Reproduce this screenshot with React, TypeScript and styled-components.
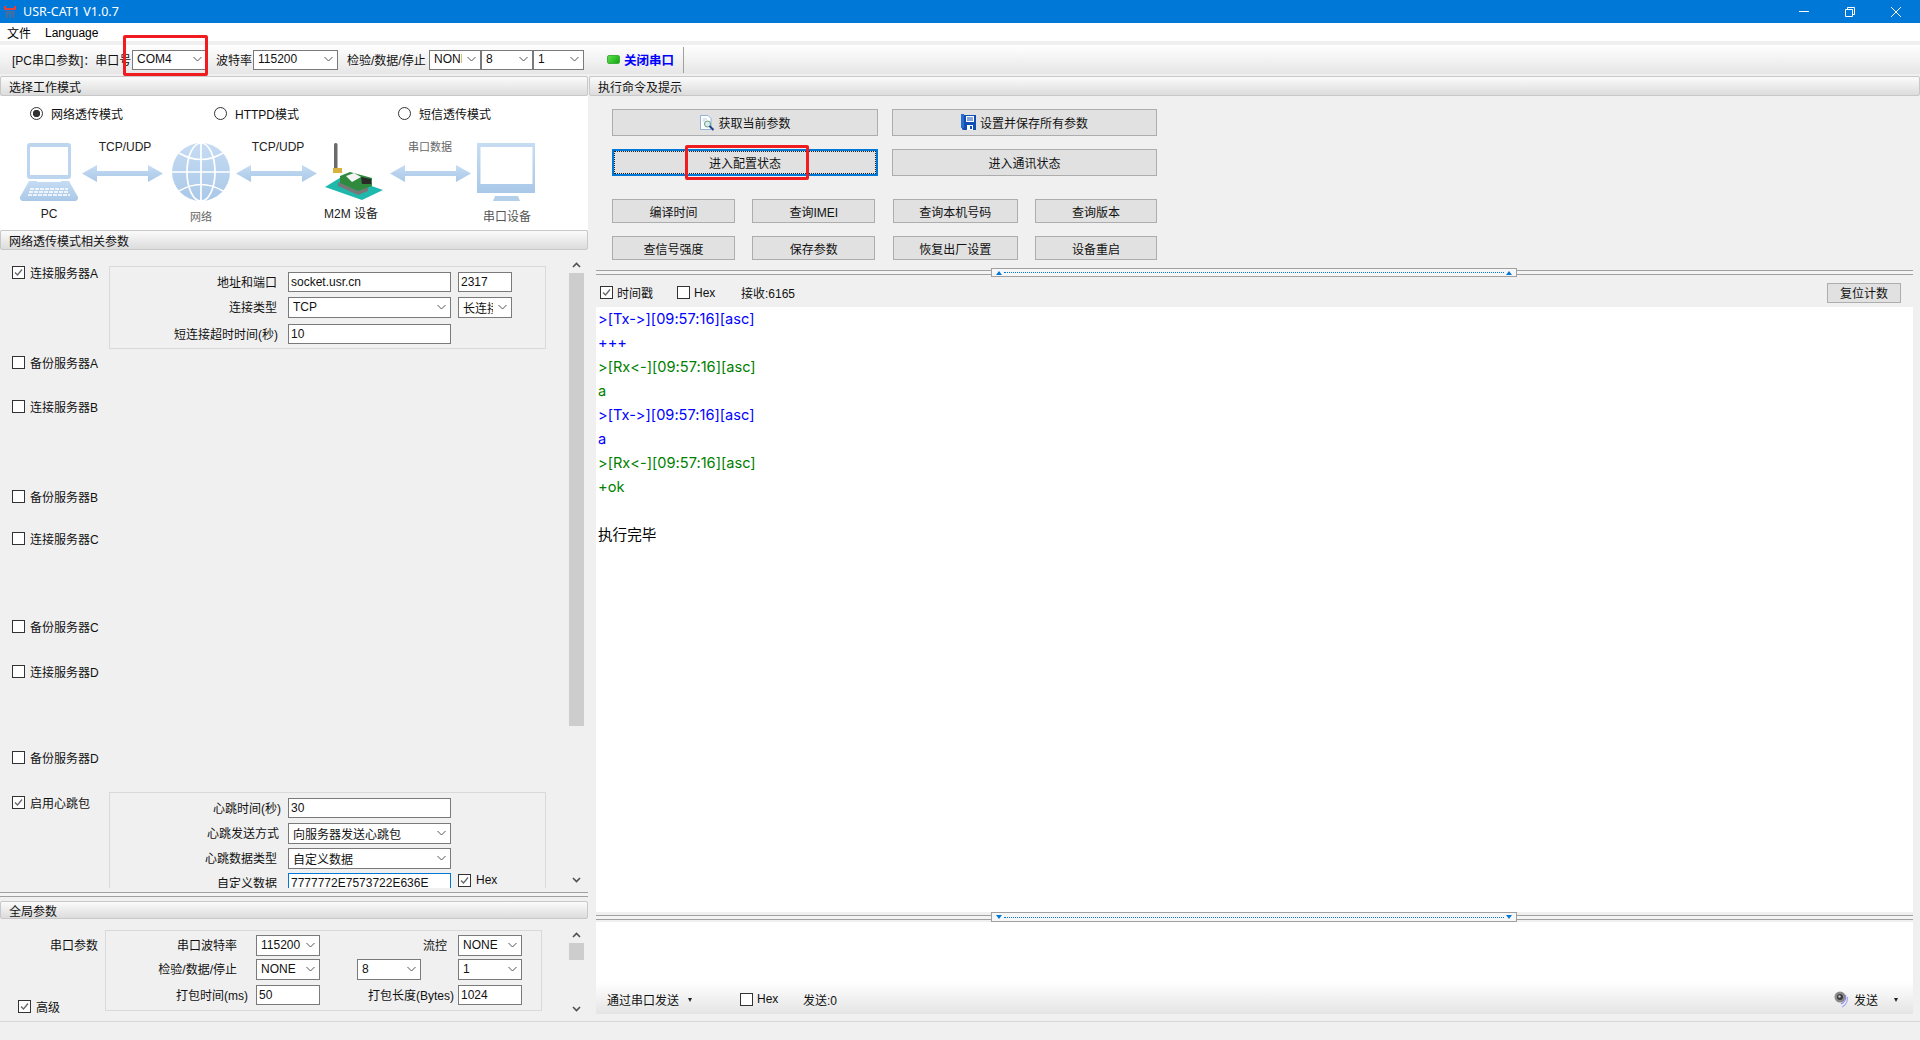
import React from 'react';
import styled, { createGlobalStyle } from 'styled-components';

const GlobalStyle = createGlobalStyle`
  html, body { margin: 0; padding: 0; background: #f0f0f0; }
  * { box-sizing: border-box; }
  body {
    font-family: "Liberation Sans", "Noto Sans CJK SC", sans-serif;
    font-size: 12px;
    color: #000;
  }
`;

const Root = styled.div`
  width: 1920px;
  height: 1040px;
  display: flex;
  flex-direction: column;
  overflow: hidden;
  background: #f0f0f0;
`;

const TitleBar = styled.div`
  height: 23px;
  flex: none;
  display: flex;
  align-items: center;
  padding: 0 1px 0 4px;
  background: #0078d7;
  color: #fff;
  font-family: "Noto Sans", "Noto Sans CJK SC", sans-serif;
  font-size: 12.5px;
`;

const TitleText = styled.span`
  margin-left: 7px;
  flex: 1;
`;

const WinButton = styled.div`
  width: 46px;
  height: 23px;
  display: flex;
  align-items: center;
  justify-content: center;
`;

const MenuBar = styled.div`
  height: 18px;
  flex: none;
  display: flex;
  align-items: center;
  gap: 14px;
  padding: 1px 0 0 7px;
  background: #fff;
  font-size: 12px;
`;

const Toolbar = styled.div`
  height: 29px;
  flex: none;
  margin-top: 4px;
  display: flex;
  align-items: center;
  padding-left: 12px;
  background: linear-gradient(#ffffff, #e6e6e6);
`;

const ToolLabel = styled.span<{ $w: number; $ml?: number }>`
  width: ${(p) => p.$w}px;
  margin-left: ${(p) => p.$ml ?? 0}px;
  flex: none;
  white-space: nowrap;
  color: #111;
`;

const Led = styled.span`
  width: 13px;
  height: 9px;
  margin-left: 23px;
  flex: none;
  border-radius: 2px;
  background: linear-gradient(135deg, #5ee04e, #0fa80f);
  border: 1px solid #3fae3a;
`;

const PortToggle = styled.span`
  margin-left: 4px;
  width: 59px;
  flex: none;
  color: #0000ff;
  font-weight: 700;
  font-size: 12.5px;
`;

const ToolSep = styled.span`
  width: 1px;
  height: 26px;
  background: #a0a0a0;
`;

const Main = styled.div`
  flex: 1;
  min-height: 0;
  margin-top: 2px;
  display: flex;
`;

const LeftPane = styled.div`
  width: 589px;
  flex: none;
  display: flex;
  flex-direction: column;
`;

const RightPane = styled.div`
  flex: 1;
  min-width: 0;
  display: flex;
  flex-direction: column;
`;

const SectionHeader = styled.div<{ $h?: number; $full?: boolean }>`
  height: ${(p) => p.$h ?? 20}px;
  flex: none;
  margin-right: ${(p) => (p.$full ? 0 : 1)}px;
  display: flex;
  align-items: center;
  padding-left: 8px;
  border: 1px solid #c8c8c8;
  border-radius: 2px;
  background: linear-gradient(#fbfbfb, #dcdcdc);
  color: #111;
`;

const ModePanel = styled.div`
  height: 134px;
  flex: none;
  margin-right: 1px;
  display: flex;
  flex-direction: column;
  background: #fff;
`;

const RadioRow = styled.div`
  height: 38px;
  flex: none;
  display: flex;
  align-items: center;
  padding: 0 0 3px 30px;
`;

const RadioItem = styled.div<{ $w: number }>`
  width: ${(p) => p.$w}px;
  display: flex;
  align-items: center;
  gap: 8px;
  color: #111;
`;

const RadioMark = styled.span<{ $on?: boolean }>`
  width: 13px;
  height: 13px;
  flex: none;
  border: 1px solid #333;
  border-radius: 50%;
  background: ${(p) => (p.$on ? 'radial-gradient(circle, #333 0 3.4px, #fff 4px)' : '#fff')};
`;

const Diagram = styled.svg`
  display: block;
  width: 589px;
  height: 96px;
`;

const NetPane = styled.div`
  flex: 1;
  min-height: 0;
  display: flex;
  overflow: hidden;
`;

const NetContent = styled.div`
  width: 569px;
  flex: none;
  padding-top: 16px;
`;

const ServerRow = styled.div<{ $h: number }>`
  height: ${(p) => p.$h}px;
  display: flex;
  align-items: flex-start;
`;

const ServerCheck = styled.div<{ $top?: number }>`
  width: 109px;
  flex: none;
  margin-top: -1px;
  padding: ${(p) => p.$top ?? 0}px 0 0 12px;
`;

const CheckItem = styled.label<{ $w?: number }>`
  display: inline-flex;
  align-items: center;
  gap: ${(p) => (p.$w ? 4 : 5)}px;
  width: ${(p) => (p.$w ? `${p.$w}px` : 'auto')};
  height: 14px;
  flex: none;
  white-space: nowrap;
  color: #111;
`;

const CheckBox = styled.span`
  width: 13px;
  height: 13px;
  flex: none;
  display: flex;
  align-items: center;
  justify-content: center;
  border: 1px solid #333;
  background: #fff;
`;

const GroupBox = styled.div<{ $rows: string; $pt?: number; $pb?: number; $cols?: string }>`
  width: 437px;
  flex: none;
  display: grid;
  grid-template-columns: ${(p) => p.$cols ?? '171px 163px 54px'};
  grid-template-rows: ${(p) => p.$rows};
  column-gap: ${(p) => (p.$cols ? 0 : 7)}px;
  padding: ${(p) => p.$pt ?? 5}px 0 ${(p) => p.$pb ?? 4}px;
  border: 1px solid #d9d9d9;
`;

const FieldLabel = styled.span<{ $pr?: number; $span?: number }>`
  height: 20px;
  display: flex;
  align-items: center;
  justify-content: flex-end;
  grid-column: span ${(p) => p.$span ?? 1};
  padding: 0 ${(p) => p.$pr ?? 4}px 1px 0;
  white-space: nowrap;
  color: #111;
`;

const Spacer = styled.span``;

const TextBox = styled.input<{ $focus?: boolean }>`
  width: 100%;
  height: 20px;
  padding: 0 1px 1px 2px;
  border: 1px solid ${(p) => (p.$focus ? '#0078d7' : '#7a7a7a')};
  border-radius: 0;
  outline: none;
  background: #fff;
  font: inherit;
  color: #111;
`;

const SelectBox = styled.div<{ $w?: number; $h?: number }>`
  position: relative;
  width: ${(p) => (p.$w ? `${p.$w}px` : '100%')};
  height: ${(p) => p.$h ?? 21}px;
  flex: none;
  display: flex;
  align-items: center;
  padding: 0 0 1px 4px;
  border: 1px solid #7a7a7a;
  background: #fff;
  color: #111;
`;

const SelectText = styled.span`
  flex: 1;
  min-width: 0;
  overflow: hidden;
  white-space: nowrap;
`;

const SelectArrow = styled.span`
  width: 18px;
  flex: none;
  display: flex;
  align-items: center;
  justify-content: center;
`;

const RedBox = styled.span<{ $l: number; $r: number; $t: number; $b: number }>`
  position: absolute;
  left: ${(p) => p.$l}px;
  right: ${(p) => p.$r}px;
  top: ${(p) => p.$t}px;
  bottom: ${(p) => p.$b}px;
  border: 3px solid #f01c20;
  border-radius: 2px;
  pointer-events: none;
`;

const ScrollBar = styled.div<{ $mt: number; $mb?: number }>`
  width: 15px;
  flex: none;
  margin: ${(p) => p.$mt}px 0 ${(p) => p.$mb ?? 0}px;
  display: flex;
  flex-direction: column;
`;

const ScrollBtn = styled.div<{ $h: number }>`
  height: ${(p) => p.$h}px;
  flex: none;
  display: flex;
  align-items: center;
  justify-content: center;
`;

const ScrollTrack = styled.div`
  flex: 1;
  min-height: 0;
`;

const ScrollThumb = styled.div<{ $h: number }>`
  height: ${(p) => p.$h}px;
  background: #cdcdcd;
`;

const PaneSplit = styled.div`
  height: 13px;
  flex: none;
  margin-right: 1px;
  display: flex;
  align-items: center;
`;

const SplitLine = styled.div<{ $w?: number }>`
  height: 5px;
  flex: ${(p) => (p.$w ? 'none' : '1')};
  width: ${(p) => (p.$w ? `${p.$w}px` : 'auto')};
  border-top: 1px solid #a0a0a0;
  border-bottom: 1px solid #a0a0a0;
  background: #f4f4f4;
`;

const GlobalPane = styled.div`
  height: 102px;
  flex: none;
  display: flex;
`;

const GlobalSide = styled.div`
  width: 105px;
  flex: none;
  display: flex;
  flex-direction: column;
  justify-content: space-between;
  padding: 17px 0 8px 18px;
`;

const GlobalCaption = styled.span`
  padding-left: 32px;
  white-space: nowrap;
  color: #111;
`;

const GlobalBody = styled.div`
  width: 464px;
  flex: none;
  padding-top: 11px;
`;

const CommandArea = styled.div`
  flex: none;
  padding: 13px 0 0 23px;
  display: flex;
  flex-direction: column;
`;

const CommandRow = styled.div<{ $cols: string; $gap: number; $mt?: number }>`
  display: grid;
  grid-template-columns: ${(p) => p.$cols};
  column-gap: ${(p) => p.$gap}px;
  margin-top: ${(p) => p.$mt ?? 0}px;
`;

const CmdButton = styled.div<{ $h?: number; $focus?: boolean }>`
  position: relative;
  height: ${(p) => p.$h ?? 24}px;
  display: flex;
  align-items: center;
  justify-content: center;
  gap: 3px;
  border: ${(p) => (p.$focus ? '2px solid #0078d7' : '1px solid #adadad')};
  background: #e1e1e1;
  color: #111;
  ${(p) => (p.$focus ? 'outline: 1px dotted #222; outline-offset: -3px;' : '')}
`;

const ConsolePane = styled.div`
  flex: 1;
  min-height: 0;
  display: flex;
  flex-direction: column;
  padding: 0 7px 7px;
`;

const HSplit = styled.div<{ $mt?: number; $h?: number }>`
  height: ${(p) => p.$h ?? 9}px;
  margin-top: ${(p) => p.$mt ?? 0}px;
  flex: none;
  display: flex;
  align-items: center;
`;

const SplitHandle = styled.div`
  width: 526px;
  height: 100%;
  flex: none;
  display: flex;
  align-items: center;
  gap: 2px;
  padding: 0 4px;
  border: 1px solid #a0a0a0;
  background: #f7f7f7;
`;

const HandleDots = styled.span`
  flex: 1;
  border-top: 1px dotted #0078d7;
`;

const Tri = styled.span<{ $down?: boolean }>`
  width: 0;
  height: 0;
  flex: none;
  border-left: 3px solid transparent;
  border-right: 3px solid transparent;
  ${(p) => (p.$down ? 'border-top: 4px solid #0078d7;' : 'border-bottom: 4px solid #0078d7;')}
`;

const RecvBar = styled.div`
  height: 30px;
  flex: none;
  display: flex;
  align-items: center;
  padding: 1px 12px 0 4px;
`;

const CountText = styled.span`
  flex: 1;
  color: #111;
`;

const ResetButton = styled(CmdButton)`
  width: 74px;
  height: 20px;
  border-color: #adadad;
`;

const LogView = styled.div`
  flex: 1;
  min-height: 0;
  padding: 0 0 0 2px;
  background: #fff;
  font-family: Inter, "Noto Sans CJK SC", sans-serif;
  font-size: 14.6px;
  line-height: 24px;
  font-variant-ligatures: none;
  font-feature-settings: "calt" 0, "liga" 0;
`;

const LogLine = styled.div<{ $color: string }>`
  height: 24px;
  color: ${(p) => p.$color};
  white-space: pre;
`;

const SendPanel = styled.div`
  height: 92px;
  flex: none;
  display: flex;
  flex-direction: column;
  background: #fff;
`;

const SendInput = styled.div`
  flex: 1;
`;

const SendBar = styled.div`
  height: 32px;
  flex: none;
  display: flex;
  align-items: center;
  padding: 2px 15px 0 11px;
  background: linear-gradient(#ffffff, #e4e4e4);
`;

const SendLabel = styled.span<{ $w?: number }>`
  width: ${(p) => (p.$w ? `${p.$w}px` : 'auto')};
  flex: none;
  white-space: nowrap;
  color: #111;
`;

const DropTri = styled.span<{ $ml: number; $mr?: number }>`
  width: 0;
  height: 0;
  flex: none;
  margin: 1px ${(p) => p.$mr ?? 0}px 0 ${(p) => p.$ml}px;
  border-left: 2.5px solid transparent;
  border-right: 2.5px solid transparent;
  border-top: 4px solid #222;
`;

const SendRight = styled.div`
  margin-left: auto;
  display: flex;
  align-items: center;
  gap: 5px;
`;

const StatusBar = styled.div`
  height: 19px;
  flex: none;
  border-top: 1px solid #d6d6d6;
  background: #f0f0f0;
`;

const Chevron = () => (
  <svg width="9" height="6" viewBox="0 0 9 6">
    <path d="M0.5 1 L4.5 5 L8.5 1" fill="none" stroke="#555" strokeWidth="1" />
  </svg>
);

const Select = ({ value, w, h, children }: { value: string; w?: number; h?: number; children?: React.ReactNode }) => (
  <SelectBox $w={w} $h={h}>
    <SelectText>{value}</SelectText>
    <SelectArrow>
      <Chevron />
    </SelectArrow>
    {children}
  </SelectBox>
);

const Check = ({ label, on, w }: { label: string; on?: boolean; w?: number }) => (
  <CheckItem $w={w}>
    <CheckBox>
      {on && (
        <svg width="11" height="11" viewBox="0 0 11 11">
          <path d="M2 5.5 L4.5 8 L9 2.5" fill="none" stroke="#666" strokeWidth="1.3" />
        </svg>
      )}
    </CheckBox>
    {label}
  </CheckItem>
);

const ScrollArrow = ({ down }: { down?: boolean }) => (
  <svg width="9" height="6" viewBox="0 0 9 6">
    <path d={down ? 'M1 1 L4.5 4.5 L8 1' : 'M1 5 L4.5 1.5 L8 5'} fill="none" stroke="#505050" strokeWidth="1.6" />
  </svg>
);

const AppIcon = () => (
  <svg width="12" height="14" viewBox="0 0 12 14">
    <path d="M0 1 H2 V3 H10 V1 H12 V5 H0 Z" fill="#e2403a" />
    <path d="M1 6 H11 L10 13 H8 V9 H7 V13 H5 V9 H4 V13 H2 Z" fill="#3d6fa8" />
  </svg>
);

const DocIcon = () => (
  <svg width="16" height="16" viewBox="0 0 16 16">
    <path d="M1.5 0.5 H9 L12 3.5 V14.5 H1.5 Z" fill="#fff" stroke="#8fb2d6" />
    <path d="M3.5 4 H8 M3.5 6 H6" stroke="#b8cde2" />
    <circle cx="8.5" cy="9" r="3" fill="#d8ecf4" stroke="#6c9a7c" />
    <path d="M10.5 11 L14.5 15" stroke="#1f3f8f" strokeWidth="2" />
  </svg>
);

const SaveIcon = () => (
  <svg width="16" height="17" viewBox="0 0 16 17">
    <path d="M1 1 H15 V16 H2 L1 15 Z" fill="#0f4fb5" />
    <path d="M0 0 H3 V14 H0 Z" fill="#2a6fd0" />
    <path d="M5 2 H13 V8 H5 Z" fill="#fff" />
    <path d="M6 4 H12 M6 6 H12" stroke="#0f4fb5" />
    <path d="M6 11 H12 V16 H6 Z" fill="#fff" />
    <path d="M9 12 H11 V15 H9 Z" fill="#0f4fb5" />
  </svg>
);

const SpeakerIcon = () => (
  <svg width="15" height="17" viewBox="0 0 15 17">
    <circle cx="6" cy="6" r="5.5" fill="#8a8a8a" />
    <circle cx="6" cy="6" r="3" fill="#3c3c3c" />
    <circle cx="5.5" cy="5.5" r="1.2" fill="#c8c8c8" />
    <path d="M11.5 4 Q13 10 7 13" fill="none" stroke="#8d86e6" strokeWidth="1.2" />
    <path d="M13.5 6 Q14 13 8 16" fill="none" stroke="#aca6ee" strokeWidth="1.2" />
  </svg>
);

const DoubleArrow = ({ x }: { x: number }) => (
  <path
    d={`M${x} 173.5 L${x + 15} 165 V171 H${x + 66} V165 L${x + 81} 173.5 L${x + 66} 182 V176 H${x + 15} V182 Z`}
    fill="url(#blueFill)"
  />
);

const ModeDiagram = () => (
  <Diagram viewBox="0 134 589 96">
    <defs>
      <linearGradient id="blueFill" x1="0" y1="0" x2="0" y2="1">
        <stop offset="0" stopColor="#c6dcf3" />
        <stop offset="1" stopColor="#a9c8e8" />
      </linearGradient>
    </defs>
    {/* laptop */}
    <rect x="27" y="143" width="44" height="36" rx="3" fill="#bdd6f0" />
    <rect x="30" y="147" width="38" height="28" fill="#fff" />
    <path d="M29 181 H69 L78 197 V199 L76 201 H22 L20 199 V197 Z" fill="url(#blueFill)" />
    <path d="M30 189 H68 M29 192 H69 M28 195 H70" stroke="#fff" strokeWidth="1.6" strokeDasharray="4 1" />
    <path d="M37 181.5 H61" stroke="#fff" strokeWidth="1" />
    <DoubleArrow x={82} />
    {/* globe */}
    <circle cx="201" cy="172" r="29" fill="url(#blueFill)" />
    <g fill="none" stroke="#fff" strokeWidth="1.7">
      <ellipse cx="201" cy="172" rx="14" ry="29" />
      <path d="M201 143 V201 M172 172 H230" />
      <path d="M179 153 Q201 166 223 153 M179 191 Q201 178 223 191" />
    </g>
    <DoubleArrow x={236} />
    {/* m2m module */}
    <rect x="334" y="143" width="3.5" height="28" rx="1.5" fill="#6b6b6b" />
    <rect x="333" y="168" width="9" height="5" fill="#d8b23c" />
    <path d="M325 187 L343 176 L383 190 L362 200 Z" fill="#1fb8ad" />
    <path d="M338 182 L358 191 L368 187 L368 191 L358 195 L338 186 Z" fill="#777" />
    <path d="M340 176 L350 172 L372 178 L372 186 L358 191 L340 183 Z" fill="#2f8a3d" />
    <path d="M346 176 L354 173 L361 177 L352 182 Z" fill="#f4f4f4" />
    <path d="M361 177 L371 179 L371 184 L362 184 Z" fill="#2a2a2a" />
    <DoubleArrow x={390} />
    {/* monitor */}
    <rect x="477" y="143" width="58" height="50" fill="url(#blueFill)" />
    <rect x="480.5" y="147" width="52" height="37" fill="#fff" />
    <path d="M495 196 H518 L520 201 H493 Z" fill="#b4cfea" />
    <g fontFamily="Liberation Sans, Noto Sans CJK SC, sans-serif" fontSize="12" textAnchor="middle" fill="#222">
      <text x="125" y="151">TCP/UDP</text>
      <text x="278" y="151">TCP/UDP</text>
      <text x="430" y="151" fill="#666" fontSize="11">串口数据</text>
      <text x="49" y="218">PC</text>
      <text x="201" y="221" fill="#666" fontSize="11">网络</text>
      <text x="351" y="218">M2M 设备</text>
      <text x="507" y="221" fill="#555">串口设备</text>
    </g>
  </Diagram>
);

const logLines: Array<[string, string]> = [
  ['>[Tx->][09:57:16][asc]', '#0000ff'],
  ['+++', '#0000ff'],
  ['>[Rx<-][09:57:16][asc]', '#008000'],
  ['a', '#008000'],
  ['>[Tx->][09:57:16][asc]', '#0000ff'],
  ['a', '#0000ff'],
  ['>[Rx<-][09:57:16][asc]', '#008000'],
  ['+ok', '#008000'],
  ['', '#000'],
  ['执行完毕', '#000'],
];

const servers: Array<[string, number]> = [
  ['备份服务器A', 44],
  ['连接服务器B', 90],
  ['备份服务器B', 42],
  ['连接服务器C', 88],
  ['备份服务器C', 45],
  ['连接服务器D', 86],
  ['备份服务器D', 41],
];

const GLOBAL_COLS = '150px 64px 37px 64px 37px 64px';

export default function App() {
  return (
    <Root>
      <GlobalStyle />
      <TitleBar>
        <AppIcon />
        <TitleText>USR-CAT1 V1.0.7</TitleText>
        <WinButton>
          <svg width="10" height="1" viewBox="0 0 10 1">
            <path d="M0 0.5 H10" stroke="#fff" />
          </svg>
        </WinButton>
        <WinButton>
          <svg width="10" height="10" viewBox="0 0 10 10">
            <path d="M2.5 2 V0.5 H9.5 V7.5 H8 M0.5 2.5 H7.5 V9.5 H0.5 Z" fill="none" stroke="#fff" />
          </svg>
        </WinButton>
        <WinButton>
          <svg width="10" height="10" viewBox="0 0 10 10">
            <path d="M0 0 L10 10 M10 0 L0 10" stroke="#fff" />
          </svg>
        </WinButton>
      </TitleBar>
      <MenuBar>
        <span>文件</span>
        <span>Language</span>
      </MenuBar>
      <Toolbar>
        <ToolLabel $w={120}>[PC串口参数]：串口号</ToolLabel>
        <Select value="COM4" w={75} h={20}>
          <RedBox $l={-10} $r={-2} $t={-16} $b={-7} />
        </Select>
        <ToolLabel $w={37} $ml={9}>波特率</ToolLabel>
        <Select value="115200" w={85} h={20} />
        <ToolLabel $w={82} $ml={9}>检验/数据/停止</ToolLabel>
        <Select value="NONE" w={52} h={20} />
        <Select value="8" w={52} h={20} />
        <Select value="1" w={51} h={20} />
        <Led />
        <PortToggle>关闭串口</PortToggle>
        <ToolSep />
      </Toolbar>
      <Main>
        <LeftPane>
          <SectionHeader>选择工作模式</SectionHeader>
          <ModePanel>
            <RadioRow>
              <RadioItem $w={184}>
                <RadioMark $on />
                网络透传模式
              </RadioItem>
              <RadioItem $w={184}>
                <RadioMark />
                HTTPD模式
              </RadioItem>
              <RadioItem $w={120}>
                <RadioMark />
                短信透传模式
              </RadioItem>
            </RadioRow>
            <ModeDiagram />
          </ModePanel>
          <SectionHeader>网络透传模式相关参数</SectionHeader>
          <NetPane>
            <NetContent>
              <ServerRow $h={90}>
                <ServerCheck>
                  <Check label="连接服务器A" on />
                </ServerCheck>
                <GroupBox $rows="25px 27px 20px">
                  <FieldLabel>地址和端口</FieldLabel>
                  <TextBox readOnly value="socket.usr.cn" />
                  <TextBox readOnly value="2317" />
                  <FieldLabel>连接类型</FieldLabel>
                  <Select value="TCP" />
                  <Select value="长连接" />
                  <FieldLabel $pr={3}>短连接超时时间(秒)</FieldLabel>
                  <TextBox readOnly value="10" />
                </GroupBox>
              </ServerRow>
              {servers.map(([name, h]) => (
                <ServerRow key={name} $h={h}>
                  <ServerCheck>
                    <Check label={name} />
                  </ServerCheck>
                </ServerRow>
              ))}
              <ServerRow $h={120}>
                <ServerCheck $top={4}>
                  <Check label="启用心跳包" on />
                </ServerCheck>
                <GroupBox $rows="25px 25px 25px 25px">
                  <FieldLabel $pr={0}>心跳时间(秒)</FieldLabel>
                  <TextBox readOnly value="30" />
                  <Spacer />
                  <FieldLabel $pr={2}>心跳发送方式</FieldLabel>
                  <Select value="向服务器发送心跳包" />
                  <Spacer />
                  <FieldLabel>心跳数据类型</FieldLabel>
                  <Select value="自定义数据" />
                  <Spacer />
                  <FieldLabel>自定义数据</FieldLabel>
                  <TextBox readOnly $focus value="7777772E7573722E636E" />
                  <Check label="Hex" on />
                </GroupBox>
              </ServerRow>
            </NetContent>
            <ScrollBar $mt={6}>
              <ScrollBtn $h={17}>
                <ScrollArrow />
              </ScrollBtn>
              <ScrollTrack>
                <ScrollThumb $h={453} />
              </ScrollTrack>
              <ScrollBtn $h={17}>
                <ScrollArrow down />
              </ScrollBtn>
            </ScrollBar>
          </NetPane>
          <PaneSplit>
            <SplitLine />
          </PaneSplit>
          <SectionHeader $h={18}>全局参数</SectionHeader>
          <GlobalPane>
            <GlobalSide>
              <GlobalCaption>串口参数</GlobalCaption>
              <Check label="高级" on />
            </GlobalSide>
            <GlobalBody>
              <GroupBox $cols={GLOBAL_COLS} $rows="24px 26px 20px" $pt={4} $pb={5}>
                <FieldLabel $pr={19}>串口波特率</FieldLabel>
                <Select value="115200" />
                <FieldLabel $span={3} $pr={11}>流控</FieldLabel>
                <Select value="NONE" />
                <FieldLabel $pr={19}>检验/数据/停止</FieldLabel>
                <Select value="NONE" />
                <Spacer />
                <Select value="8" />
                <Spacer />
                <Select value="1" />
                <FieldLabel $pr={8}>打包时间(ms)</FieldLabel>
                <TextBox readOnly value="50" />
                <FieldLabel $span={3} $pr={4}>打包长度(Bytes)</FieldLabel>
                <TextBox readOnly value="1024" />
              </GroupBox>
            </GlobalBody>
            <ScrollBar $mt={8} $mb={5}>
              <ScrollBtn $h={16}>
                <ScrollArrow />
              </ScrollBtn>
              <ScrollTrack>
                <ScrollThumb $h={17} />
              </ScrollTrack>
              <ScrollBtn $h={14}>
                <ScrollArrow down />
              </ScrollBtn>
            </ScrollBar>
          </GlobalPane>
        </LeftPane>
        <RightPane>
          <SectionHeader $full>执行命令及提示</SectionHeader>
          <CommandArea>
            <CommandRow $cols="266px 265px" $gap={14}>
              <CmdButton $h={27}>
                <DocIcon />
                获取当前参数
              </CmdButton>
              <CmdButton $h={27}>
                <SaveIcon />
                设置并保存所有参数
              </CmdButton>
            </CommandRow>
            <CommandRow $cols="266px 265px" $gap={14} $mt={13}>
              <CmdButton $h={27} $focus>
                进入配置状态
                <RedBox $l={71} $r={67} $t={-6} $b={-6} />
              </CmdButton>
              <CmdButton $h={27}>进入通讯状态</CmdButton>
            </CommandRow>
            <CommandRow $cols="123px 123px 125px 122px" $gap={17.33} $mt={23}>
              <CmdButton>编译时间</CmdButton>
              <CmdButton>查询IMEI</CmdButton>
              <CmdButton>查询本机号码</CmdButton>
              <CmdButton>查询版本</CmdButton>
            </CommandRow>
            <CommandRow $cols="123px 123px 125px 122px" $gap={17.33} $mt={13}>
              <CmdButton>查信号强度</CmdButton>
              <CmdButton>保存参数</CmdButton>
              <CmdButton>恢复出厂设置</CmdButton>
              <CmdButton>设备重启</CmdButton>
            </CommandRow>
          </CommandArea>
          <ConsolePane>
            <HSplit $mt={8}>
              <SplitLine $w={395} />
              <SplitHandle>
                <Tri />
                <HandleDots />
                <Tri />
              </SplitHandle>
              <SplitLine />
            </HSplit>
            <RecvBar>
              <Check label="时间戳" on w={77} />
              <Check label="Hex" w={64} />
              <CountText>接收:6165</CountText>
              <ResetButton>复位计数</ResetButton>
            </RecvBar>
            <LogView>
              {logLines.map(([text, color], i) => (
                <LogLine key={i} $color={color}>
                  {text}
                </LogLine>
              ))}
            </LogView>
            <HSplit $h={10}>
              <SplitLine $w={395} />
              <SplitHandle>
                <Tri $down />
                <HandleDots />
                <Tri $down />
              </SplitHandle>
              <SplitLine />
            </HSplit>
            <SendPanel>
              <SendInput />
              <SendBar>
                <SendLabel>通过串口发送</SendLabel>
                <DropTri $ml={9} $mr={48} />
                <Check label="Hex" w={63} />
                <SendLabel>发送:0</SendLabel>
                <SendRight>
                  <SpeakerIcon />
                  <SendLabel>发送</SendLabel>
                  <DropTri $ml={11} />
                </SendRight>
              </SendBar>
            </SendPanel>
          </ConsolePane>
        </RightPane>
      </Main>
      <StatusBar />
    </Root>
  );
}
